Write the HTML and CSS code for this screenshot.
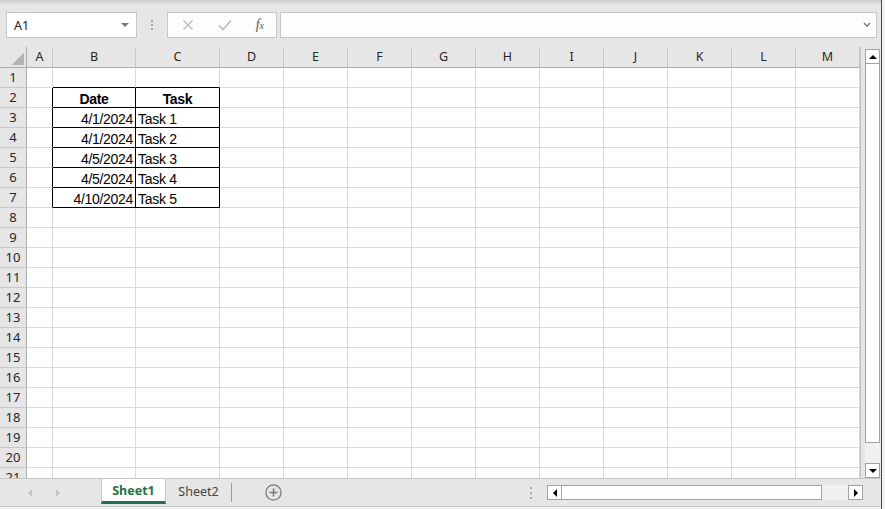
FILE: index.html
```html
<!DOCTYPE html>
<html lang="en">

<head>
    <meta charset="UTF-8">
    <meta name="viewport" content="width=device-width, initial-scale=1.0">
    <title>Book1 - Excel</title>
    <link rel="stylesheet" href="styles.css">
</head>

<body>
    <div class="app">
        <div class="top-edge"></div>

        <div class="formula-row">
            <div class="name-box">
                <span>A1</span>
                <svg class="caret" width="8" height="4" viewBox="0 0 8 4"><path d="M0 0h8L4 4z" fill="#777" /></svg>
            </div>
            <div class="grip"><i></i><i></i><i></i></div>
            <div class="fx-buttons">
                <svg width="12" height="12" viewBox="0 0 12 12"><path d="M1.5 1.5l9 9M10.5 1.5l-9 9" stroke="#bcbcbc" stroke-width="1.4" fill="none" /></svg>
                <svg width="14" height="12" viewBox="0 0 14 12"><path d="M1 6.5l4 4L13 1.5" stroke="#bcbcbc" stroke-width="1.6" fill="none" /></svg>
                <span class="fx">f<small>x</small></span>
            </div>
            <div class="formula-input">
                <svg width="8" height="6" viewBox="0 0 8 6"><path d="M1 1l3 3.2L7 1" stroke="#7a7a7a" stroke-width="1.5" fill="none" /></svg>
            </div>
        </div>

        <div class="workspace">
            <div class="sheet">
                <table class="grid">
                    <colgroup>
                        <col class="w-rh"><col class="w-a"><col class="w-b"><col class="w-c">
                        <col><col><col><col><col><col><col><col><col><col>
                    </colgroup>
                    <thead>
                        <tr><th class="corner"></th><th>A</th><th>B</th><th>C</th><th>D</th><th>E</th><th>F</th><th>G</th><th>H</th><th>I</th><th>J</th><th>K</th><th>L</th><th>M</th></tr>
                    </thead>
                    <tbody>
                        <tr><th>1</th><td></td><td class="eb"></td><td class="eb"></td><td></td><td></td><td></td><td></td><td></td><td></td><td></td><td></td><td></td><td></td></tr>
                        <tr><th>2</th><td class="er"></td><td class="box head">Date</td><td class="box head">Task</td><td></td><td></td><td></td><td></td><td></td><td></td><td></td><td></td><td></td><td></td></tr>
                        <tr><th>3</th><td class="er"></td><td class="box num">4/1/2024</td><td class="box">Task 1</td><td></td><td></td><td></td><td></td><td></td><td></td><td></td><td></td><td></td><td></td></tr>
                        <tr><th>4</th><td class="er"></td><td class="box num">4/1/2024</td><td class="box">Task 2</td><td></td><td></td><td></td><td></td><td></td><td></td><td></td><td></td><td></td><td></td></tr>
                        <tr><th>5</th><td class="er"></td><td class="box num">4/5/2024</td><td class="box">Task 3</td><td></td><td></td><td></td><td></td><td></td><td></td><td></td><td></td><td></td><td></td></tr>
                        <tr><th>6</th><td class="er"></td><td class="box num">4/5/2024</td><td class="box">Task 4</td><td></td><td></td><td></td><td></td><td></td><td></td><td></td><td></td><td></td><td></td></tr>
                        <tr><th>7</th><td class="er"></td><td class="box num">4/10/2024</td><td class="box">Task 5</td><td></td><td></td><td></td><td></td><td></td><td></td><td></td><td></td><td></td><td></td></tr>
                        <tr><th>8</th><td></td><td></td><td></td><td></td><td></td><td></td><td></td><td></td><td></td><td></td><td></td><td></td><td></td></tr>
                        <tr><th>9</th><td></td><td></td><td></td><td></td><td></td><td></td><td></td><td></td><td></td><td></td><td></td><td></td><td></td></tr>
                        <tr><th>10</th><td></td><td></td><td></td><td></td><td></td><td></td><td></td><td></td><td></td><td></td><td></td><td></td><td></td></tr>
                        <tr><th>11</th><td></td><td></td><td></td><td></td><td></td><td></td><td></td><td></td><td></td><td></td><td></td><td></td><td></td></tr>
                        <tr><th>12</th><td></td><td></td><td></td><td></td><td></td><td></td><td></td><td></td><td></td><td></td><td></td><td></td><td></td></tr>
                        <tr><th>13</th><td></td><td></td><td></td><td></td><td></td><td></td><td></td><td></td><td></td><td></td><td></td><td></td><td></td></tr>
                        <tr><th>14</th><td></td><td></td><td></td><td></td><td></td><td></td><td></td><td></td><td></td><td></td><td></td><td></td><td></td></tr>
                        <tr><th>15</th><td></td><td></td><td></td><td></td><td></td><td></td><td></td><td></td><td></td><td></td><td></td><td></td><td></td></tr>
                        <tr><th>16</th><td></td><td></td><td></td><td></td><td></td><td></td><td></td><td></td><td></td><td></td><td></td><td></td><td></td></tr>
                        <tr><th>17</th><td></td><td></td><td></td><td></td><td></td><td></td><td></td><td></td><td></td><td></td><td></td><td></td><td></td></tr>
                        <tr><th>18</th><td></td><td></td><td></td><td></td><td></td><td></td><td></td><td></td><td></td><td></td><td></td><td></td><td></td></tr>
                        <tr><th>19</th><td></td><td></td><td></td><td></td><td></td><td></td><td></td><td></td><td></td><td></td><td></td><td></td><td></td></tr>
                        <tr><th>20</th><td></td><td></td><td></td><td></td><td></td><td></td><td></td><td></td><td></td><td></td><td></td><td></td><td></td></tr>
                        <tr><th>21</th><td></td><td></td><td></td><td></td><td></td><td></td><td></td><td></td><td></td><td></td><td></td><td></td><td></td></tr>
                    </tbody>
                </table>
            </div>

            <div class="vscroll">
                <div class="sb-btn"><span class="tri up"></span></div>
                <div class="sb-thumb"></div>
                <div class="sb-track"></div>
                <div class="sb-btn"><span class="tri down"></span></div>
            </div>
        </div>

        <div class="tabbar">
            <div class="tab-nav"><span class="nav-l"></span><span class="nav-r"></span></div>
            <div class="tab active">Sheet1</div>
            <div class="tab">Sheet2</div>
            <div class="tab-sep"></div>
            <svg class="add-sheet" width="17" height="17" viewBox="0 0 17 17">
                <circle cx="8.5" cy="8.5" r="7.6" stroke="#7a7a7a" stroke-width="1.3" fill="none" />
                <path d="M8.5 4.5v8M4.5 8.5h8" stroke="#7a7a7a" stroke-width="1.5" />
            </svg>
            <div class="spacer"></div>
            <div class="grip grip-h"><i></i><i></i><i></i></div>
            <div class="hscroll">
                <div class="sb-btn"><span class="tri left"></span></div>
                <div class="sb-thumb"></div>
                <div class="sb-track"></div>
                <div class="sb-btn"><span class="tri right"></span></div>
            </div>
        </div>
        <div class="status-edge"></div>
    </div>
</body>

</html>
```

FILE: styles.css
```css
* {
    margin: 0;
    padding: 0;
    box-sizing: border-box;
}

html {
    background: #f2f2f2;
}

body {
    width: 885px;
    height: 509px;
    overflow: hidden;
    font-family: "Noto Sans", sans-serif;
    color: #222;
}

.app {
    display: flex;
    flex-direction: column;
    width: 882px;
    height: 509px;
    background: #e6e6e6;
    border-right: 1px solid #4a4a4a;
}

.top-edge {
    height: 5px;
    background: linear-gradient(#cdcdcd, #e6e6e6);
}

/* name box + formula bar */
.formula-row {
    display: flex;
    height: 26px;
    margin: 7px 0 9px;
    padding-left: 6px;
}

.name-box {
    display: flex;
    align-items: center;
    justify-content: space-between;
    width: 131px;
    padding: 0 7px 0 7px;
    background: #fff;
    border: 1px solid #c6c6c6;
    font-size: 12.5px;
}

.grip {
    display: flex;
    flex-direction: column;
    align-items: center;
    justify-content: center;
    gap: 2px;
    width: 30px;
}

.grip i {
    width: 2px;
    height: 2px;
    background: #a6a6a6;
}

.fx-buttons {
    display: flex;
    align-items: center;
    justify-content: space-between;
    width: 110px;
    padding: 0 12px 0 14px;
    background: #fdfdfd;
    border: 1px solid #c6c6c6;
}

.fx {
    font-family: "Liberation Serif", serif;
    font-style: italic;
    font-size: 14px;
    color: #555;
}

.fx small {
    font-size: 10px;
}

.formula-input {
    display: flex;
    align-items: center;
    justify-content: flex-end;
    width: 597px;
    margin-left: 3px;
    padding-right: 5px;
    background: #fdfdfd;
    border: 1px solid #c6c6c6;
}

/* grid */
.workspace {
    display: flex;
    height: 431px;
}

.sheet {
    width: 861px;
    height: 431px;
    overflow: hidden;
    background: #fff;
    border-right: 1px solid #c0c0c0;
}

.grid {
    width: 860px;
    table-layout: fixed;
    border-collapse: separate;
    border-spacing: 0;
    font-family: "Liberation Sans", Arial, sans-serif;
    font-size: 14px;
    letter-spacing: -0.3px;
    color: #000;
}

.grid col {
    width: 64px;
}

.grid .w-rh {
    width: 27px;
}

.grid .w-a {
    width: 26px;
}

.grid .w-b {
    width: 83px;
}

.grid .w-c {
    width: 84px;
}

.grid td {
    height: 20px;
    padding: 3px 2px 0;
    line-height: 16px;
    vertical-align: top;
    white-space: nowrap;
    overflow: hidden;
    border-right: 1px solid #dadada;
    border-bottom: 1px solid #dadada;
}

.grid th {
    height: 20px;
    background: #e6e6e6;
    font-family: "Noto Sans", sans-serif;
    font-size: 13px;
    font-weight: normal;
    letter-spacing: 0;
    line-height: 19px;
    color: #262626;
    border-right: 1px solid #ababab;
    border-bottom: 1px solid #c8c8c8;
}

.grid thead th {
    height: 21px;
    font-size: 12.5px;
    line-height: 20px;
    border-right-color: #c8c8c8;
    border-bottom-color: #ababab;
}

.grid thead th.corner {
    border-right-color: #ababab;
    background: linear-gradient(135deg, transparent 50%, #b4b4b4 50%) no-repeat right 2px bottom 2px / 13px 13px, #e6e6e6;
}

.grid td.er {
    border-right-color: #000;
}

.grid td.eb {
    border-bottom-color: #000;
}

.grid td.box {
    border-right-color: #000;
    border-bottom-color: #000;
}

.grid td.head {
    font-weight: bold;
    text-align: center;
}

.grid td.num {
    text-align: right;
}

/* scrollbars */
.vscroll {
    display: flex;
    flex-direction: column;
    width: 15px;
    margin-left: 4px;
    padding-top: 2px;
}

.sb-btn {
    display: flex;
    align-items: center;
    justify-content: center;
    width: 15px;
    height: 15px;
    background: #fff;
    border: 1px solid #a3a3a3;
}

.vscroll .sb-thumb {
    height: 379px;
    background: #fff;
    border: 1px solid #a3a3a3;
    border-top: none;
}

.sb-track {
    flex: 1;
    background: #f0f0f0;
}

.tri {
    width: 0;
    height: 0;
    border: 4px solid transparent;
}

.tri.up {
    border-top: none;
    border-bottom: 4px solid #000;
}

.tri.down {
    border-bottom: none;
    border-top: 4px solid #000;
}

.tri.left {
    border-left: none;
    border-right: 4px solid #000;
}

.tri.right {
    border-right: none;
    border-left: 4px solid #000;
}

/* sheet tabs */
.tabbar {
    display: flex;
    align-items: center;
    height: 28px;
    border-top: 1px solid #c6c6c6;
}

.tab-nav {
    display: flex;
    align-items: center;
    gap: 24px;
    width: 101px;
    padding-left: 28px;
}

.nav-l,
.nav-r {
    width: 0;
    height: 0;
    border: 4px solid transparent;
}

.nav-l {
    border-left: none;
    border-right: 4px solid #c4c4c4;
}

.nav-r {
    border-right: none;
    border-left: 4px solid #c4c4c4;
}

.tab {
    display: flex;
    align-items: center;
    justify-content: center;
    align-self: flex-start;
    width: 65px;
    height: 25px;
    font-size: 12.5px;
    color: #444;
}

.tab.active {
    padding-top: 1px;
    background: #fff;
    border-left: 1px solid #c6c6c6;
    border-right: 1px solid #c6c6c6;
    border-bottom: 3px solid #217346;
    color: #217346;
    font-weight: bold;
}

.tab-sep {
    width: 1px;
    height: 19px;
    background: #9c9c9c;
}

.add-sheet {
    margin-left: 33px;
}

.spacer {
    flex: 1;
}

.grip-h {
    width: 3px;
    margin-right: 15px;
    gap: 3px;
}

.hscroll {
    display: flex;
    width: 316px;
    height: 15px;
    margin-right: 18px;
}

.hscroll .sb-thumb {
    width: 260px;
    background: #fff;
    border: 1px solid #a3a3a3;
    border-left: none;
}

.status-edge {
    height: 3px;
    background: #f3f3f3;
    border-top: 1px solid #c6c6c6;
}
```
